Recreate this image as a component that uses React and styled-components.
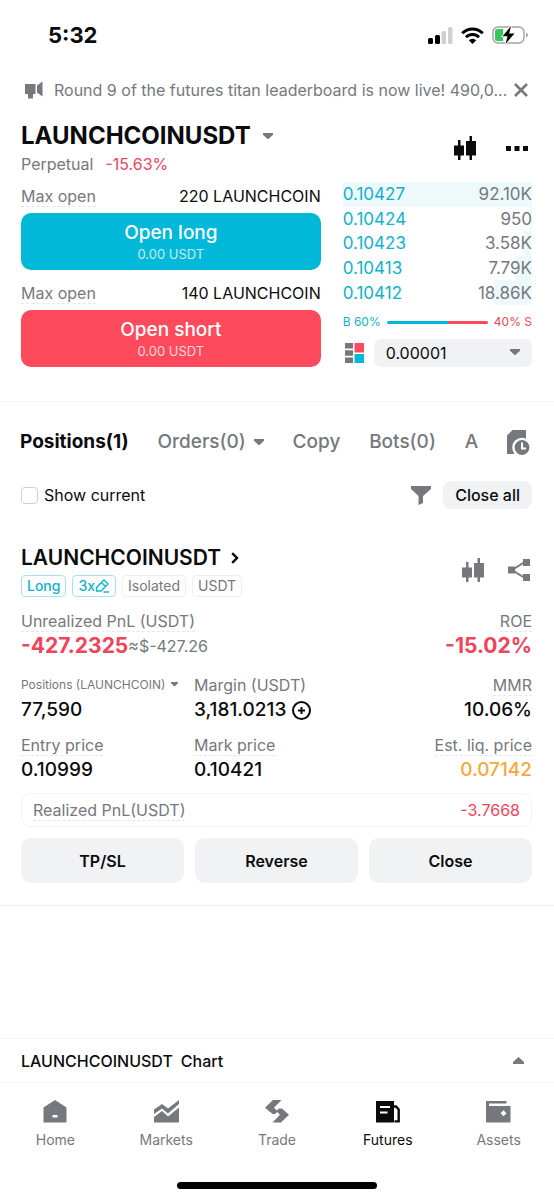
import React from "react";
import styled, { createGlobalStyle } from "styled-components";

const GlobalStyle = createGlobalStyle`
  * {
    box-sizing: border-box;
  }
  body {
    margin: 0;
    background: #ffffff;
    color: #0b0b0d;
    font-family: Inter, "Liberation Sans", sans-serif;
    font-size: 16px;
    line-height: 20px;
  }
  button, select, input {
    font: inherit;
    color: inherit;
  }
  button {
    border: none;
    background: none;
    padding: 0;
    cursor: pointer;
  }
  h1, h2, p, dl, dd {
    margin: 0;
  }
  svg {
    display: block;
    flex-shrink: 0;
  }
`;

const cyan = "#02b8d8";
const cyanText = "#0fb1cb";
const red = "#fe4a5d";
const redText = "#f0445a";
const grey = "#76787e";

const Page = styled.div`
  min-height: 100vh;
  display: flex;
  flex-direction: column;
`;
const StatusBar = styled.div`
  display: flex;
  align-items: center;
  justify-content: space-between;
  height: 70px;
  padding: 0 26px 0 48px;
`;
const Time = styled.span`
  font-size: 22px;
  line-height: 28px;
  font-weight: 700;
`;
const StatusIcons = styled.div`
  display: flex;
  align-items: center;
  gap: 8px;
`;
const Notice = styled.div`
  display: flex;
  align-items: center;
  gap: 4px;
  height: 40px;
  padding: 0 26px 0 24px;
  color: ${grey};
`;
const NoticeText = styled.p`
  flex: 1;
  min-width: 0;
  overflow: hidden;
  white-space: nowrap;
  text-overflow: ellipsis;
`;
const IconButton = styled.button`
  display: flex;
  color: ${(props) => props.$color || grey};
`;
const PairHeader = styled.header`
  display: flex;
  align-items: center;
  justify-content: space-between;
  padding: 12px 26px 0 21px;
`;
const PairTitle = styled.h1`
  display: flex;
  align-items: center;
  gap: 12px;
  font-size: 24px;
  line-height: 28px;
  font-weight: 700;
`;
const PairInfo = styled.p`
  display: flex;
  gap: 12px;
  padding-top: 4px;
  color: ${grey};
`;
const Loss = styled.span`
  color: ${redText};
`;
const HeaderIcons = styled.div`
  display: flex;
  align-items: center;
  gap: ${(props) => props.$gap}px;
`;
const TradePanel = styled.section`
  display: grid;
  grid-template-columns: 19fr 12fr;
  gap: 22px;
  padding: 8px 22px 34px 21px;
  border-bottom: 1px solid #f1f2f3;
`;
const OrderSide = styled.div`
  display: flex;
  flex-direction: column;
  padding-top: 4px;
`;
const MaxOpen = styled.div`
  display: flex;
  justify-content: space-between;
  padding-bottom: 6px;
`;
const Hint = styled.span`
  color: ${grey};
  border-bottom: 1px dashed #e6e7e9;
`;
const OpenButton = styled.button`
  height: 57px;
  margin-bottom: ${(props) => (props.$last ? 0 : 13)}px;
  border-radius: 10px;
  background: ${(props) => props.$color};
  color: #ffffff;
  font-size: 19px;
  line-height: 24px;
  font-weight: 500;
`;
const OpenAmount = styled.small`
  display: block;
  font-size: 13px;
  line-height: 18px;
  font-weight: 400;
  opacity: 0.75;
`;
const BookSide = styled.div`
  display: flex;
  flex-direction: column;
  min-width: 0;
`;
const Book = styled.table`
  width: 100%;
  height: 123px;
  border-collapse: collapse;
  font-size: 17px;
`;
const BookRow = styled.tr`
  background: linear-gradient(#edf9fb, #edf9fb) no-repeat right / ${(props) => props.$depth}% 100%;
`;
const Price = styled.td`
  padding: 0;
  color: ${cyanText};
`;
const Amount = styled.td`
  padding: 0;
  text-align: right;
  color: ${grey};
`;
const Ratio = styled.div`
  display: flex;
  align-items: center;
  gap: 6px;
  padding: 7px 0;
  font-size: 12px;
`;
const RatioLabel = styled.span`
  color: ${(props) => props.$color};
`;
const RatioBar = styled.div`
  flex: 1;
  height: 3px;
  border-radius: 2px;
  background: linear-gradient(to right, ${cyan} ${(props) => props.$buy}%, ${red} 0);
`;
const BookTools = styled.div`
  display: flex;
  align-items: center;
  gap: 10px;
  padding-left: 2px;
`;
const SelectBox = styled.div`
  position: relative;
  flex: 1;
  svg {
    position: absolute;
    right: 12px;
    top: 10px;
    pointer-events: none;
  }
`;
const Step = styled.select`
  display: block;
  width: 100%;
  height: 28px;
  padding: 0 12px;
  appearance: none;
  border: none;
  border-radius: 7px;
  background: #f1f2f4;
`;
const Tabs = styled.nav`
  display: flex;
  align-items: center;
  justify-content: space-between;
  padding: 26px 24px 0 20px;
`;
const Tab = styled.button`
  display: flex;
  align-items: center;
  gap: 8px;
  font-size: 19px;
  line-height: 28px;
  font-weight: ${(props) => (props.$active ? 700 : 500)};
  color: ${(props) => (props.$active ? "#0b0b0d" : grey)};
`;
const Filters = styled.div`
  display: flex;
  align-items: center;
  padding: 25px 22px 0 21px;
`;
const ShowCurrent = styled.label`
  display: flex;
  align-items: center;
  gap: 6px;
  margin-right: auto;
`;
const Check = styled.input`
  appearance: none;
  width: 17px;
  height: 17px;
  margin: 0;
  border: 1px solid #cfd0d6;
  border-radius: 4px;
  &:checked {
    background: ${cyan};
  }
`;
const CloseAll = styled.button`
  height: 28px;
  margin-left: 12px;
  padding: 0 12px;
  border-radius: 8px;
  background: #f1f2f4;
  font-weight: 500;
`;
const Position = styled.article`
  padding: 34px 22px 22px 21px;
  border-bottom: 1px solid #eeeff0;
`;
const PositionHead = styled.div`
  display: flex;
  align-items: center;
  justify-content: space-between;
  padding-right: 2px;
`;
const PositionTitle = styled.h2`
  display: flex;
  align-items: center;
  gap: 10px;
  font-size: 21px;
  line-height: 30px;
  font-weight: 600;
`;
const Tags = styled.div`
  display: flex;
  gap: 6px;
  padding-top: 2px;
`;
const Tag = styled.span`
  display: flex;
  align-items: center;
  height: 22px;
  padding: 0 5px;
  border: 1px solid ${(props) => (props.$accent ? "#a5e3ee" : "#eeeff1")};
  border-radius: 4px;
  font-size: 14px;
  font-weight: ${(props) => (props.$accent ? 500 : 400)};
  color: ${(props) => (props.$accent ? cyanText : grey)};
`;
const Stats = styled.dl`
  display: grid;
  grid-template-columns: repeat(${(props) => props.$columns}, minmax(0, 1fr));
  column-gap: 8px;
  row-gap: 10px;
  padding-top: ${(props) => props.$top}px;
`;
const Stat = styled.div`
  display: flex;
  flex-direction: column;
  align-items: ${(props) => (props.$end ? "flex-end" : "flex-start")};
`;
const StatLabel = styled.dt`
  display: flex;
  align-items: center;
  gap: 6px;
  height: 22px;
  white-space: nowrap;
  font-size: ${(props) => (props.$small ? 12 : 16)}px;
  color: ${grey};
  border-bottom: 1px ${(props) => (props.$plain ? "solid transparent" : "dashed #e6e7e9")};
`;
const StatValue = styled.dd`
  display: flex;
  align-items: center;
  gap: 6px;
  line-height: 28px;
  font-size: ${(props) => (props.$big ? 21 : 19)}px;
  font-weight: ${(props) => (props.$big ? 700 : 500)};
  color: ${(props) => props.$color || "inherit"};
`;
const Approx = styled.span`
  margin-left: -6px;
  font-size: 16px;
  font-weight: 400;
  color: ${grey};
`;
const Realized = styled.div`
  display: flex;
  align-items: center;
  justify-content: space-between;
  height: 34px;
  margin-top: 9px;
  padding: 0 11px;
  border: 1px solid #f2f3f4;
  border-radius: 9px;
`;
const Actions = styled.div`
  display: grid;
  grid-template-columns: repeat(3, 1fr);
  gap: 11px;
  padding-top: 11px;
`;
const Action = styled.button`
  height: 45px;
  border-radius: 10px;
  background: #f1f2f4;
  font-weight: 600;
`;
const Footer = styled.footer`
  margin-top: auto;
`;
const ChartBar = styled.button`
  display: flex;
  align-items: center;
  justify-content: space-between;
  width: 100%;
  height: 45px;
  padding: 0 30px 0 21px;
  border-top: 1px solid #f3f4f5;
  border-bottom: 1px solid #f6f7f8;
  font-weight: 500;
`;
const ChartName = styled.span`
  display: flex;
  gap: 8px;
`;
const BottomNav = styled.nav`
  display: grid;
  grid-template-columns: repeat(5, 1fr);
  padding-top: 16px;
`;
const NavLink = styled.a`
  display: flex;
  flex-direction: column;
  align-items: center;
  gap: 7px;
  font-size: 14px;
  text-decoration: none;
  color: ${(props) => (props.$active ? "#0b0b0d" : grey)};
`;
const HomeIndicator = styled.div`
  width: 36%;
  height: 7px;
  margin: 32px auto 11px;
  border-radius: 4px;
  background: #000000;
`;

const Caret = ({ width = 10, up }) => (
  <svg width={width} height={(width * 7) / 11} viewBox="0 0 11 7" fill={grey}>
    {up ? <path d="M5.5 0L11 5V7H0V5Z" /> : <path d="M0 0H11V2L5.5 7L0 2Z" />}
  </svg>
);

const SignalIcon = () => (
  <svg width="25" height="17" viewBox="0 0 25 17">
    <rect x="0" y="11" width="5" height="6" rx="1.5" fill="#000" />
    <rect x="7" y="8" width="5" height="9" rx="1.5" fill="#000" />
    <rect x="13.5" y="4" width="4.5" height="13" rx="1.5" fill="#d0d0d0" />
    <rect x="20" y="0" width="4.5" height="17" rx="1.5" fill="#d0d0d0" />
  </svg>
);

const WifiIcon = () => (
  <svg width="23" height="17" viewBox="0 0 23 17" fill="none" stroke="#000" strokeWidth="3">
    <path d="M1.2 6.2A14.6 14.6 0 0 1 21.8 6.2" />
    <path d="M5 10.2A9.2 9.2 0 0 1 18 10.2" />
    <path d="M11.5 17L7.8 13.2A5.2 5.2 0 0 1 15.2 13.2Z" fill="#000" stroke="none" />
  </svg>
);

const BatteryIcon = () => (
  <svg width="36" height="20" viewBox="0 0 36 20">
    <rect x="1" y="2" width="31" height="16" rx="5" fill="none" stroke="#a3a3a3" strokeWidth="1.4" />
    <path d="M34 7.5V12.5Q36 11.5 36 10Q36 8.5 34 7.5Z" fill="#a3a3a3" />
    <path d="M5 4H11V16H5.5Q3 16 3 13.5V6.5Q3 4 5 4Z" fill="#34c759" />
    <path
      d="M19 1L10.5 11.2H15.5L13.5 19L22.5 8.6H17.2Z"
      fill="#000"
      stroke="#fff"
      strokeWidth="1.6"
      paintOrder="stroke"
    />
  </svg>
);

const HornIcon = () => (
  <svg width="26" height="18" viewBox="0 0 26 18" fill="currentColor">
    <path d="M1 3H11.5V13H9V17.5H4V13H1Z" />
    <path d="M13 4.5L18.5 0.5V15.5L13 11.5Z" />
  </svg>
);

const CandlesIcon = () => (
  <svg width="23" height="24" viewBox="0 0 23 24" fill="currentColor">
    <path d="M4 4H6.5V9.5H10V19.5H6.5V24H4V19.500H0V9.500H4Z" />
    <path d="M15.500 0H18V5H22V19.500H18V24H15.500V19.500H12V5H15.500Z" />
  </svg>
);

const DotsIcon = () => (
  <svg width="22" height="5" viewBox="0 0 22 5" fill="currentColor">
    <path d="M0 0H5V5H0ZM8.5 0H13.5V5H8.5ZM17 0H22V5H17Z" />
  </svg>
);

const BookIcon = () => (
  <svg width="19" height="20" viewBox="0 0 19 20">
    <path d="M0 0H8V5.5H0ZM0 7.3H8V12.7H0ZM0 14.5H8V20H0Z" fill={grey} />
    <path d="M9.500 0H19V9.500H9.500Z" fill={red} />
    <path d="M9.500 11H19V20H9.500Z" fill={cyan} />
  </svg>
);

const HistoryIcon = () => (
  <svg width="23" height="25" viewBox="0 0 23 25">
    <path d="M5.5 0H19V9H15A9 9 0 0 0 6 18Q6 21 7.5 24H0V5.5Z" fill={grey} />
    <circle cx="15" cy="17.5" r="7.5" fill={grey} />
    <path d="M15 12.5V18.5H19" fill="none" stroke="#fff" strokeWidth="2" />
    <circle cx="15" cy="17.5" r="8.8" fill="none" stroke="#fff" strokeWidth="2" />
  </svg>
);

const FunnelIcon = () => (
  <svg width="20" height="19" viewBox="0 0 20 19" fill="currentColor">
    <path d="M0 0H20V3L12 10V17L7.5 19V10L0 3Z" />
  </svg>
);

const ShareIcon = () => (
  <svg width="22" height="22" viewBox="0 0 22 22" fill="currentColor">
    <path d="M16 3.5L4 11L16 18.5" fill="none" stroke="currentColor" strokeWidth="2" />
    <path d="M0 7.5H7V14.5H0ZM15 0H22V7H15ZM15 15H22V22H15Z" />
  </svg>
);

const PencilIcon = () => (
  <svg width="15" height="14" viewBox="0 0 15 14" fill="none" stroke="currentColor" strokeWidth="1.4">
    <path d="M1.5 8.5L9 1L13 5L6 12H1.5ZM6.5 3.5L10.5 7.5M8.5 13H14" />
  </svg>
);

const ChevronIcon = () => (
  <svg width="8" height="12" viewBox="0 0 8 12" fill="none" stroke="#0b0b0d" strokeWidth="2.4">
    <path d="M1.2 1.2L6 6L1.2 10.8" />
  </svg>
);

const PlusIcon = () => (
  <svg width="19" height="19" viewBox="0 0 19 19" fill="none" stroke="#0b0b0d" strokeWidth="2">
    <circle cx="9.5" cy="9.5" r="8.5" />
    <path d="M9.5 6V13M6 9.5H13" />
  </svg>
);

const CloseIcon = () => (
  <svg width="14" height="14" viewBox="0 0 14 14" stroke="currentColor" strokeWidth="2.6">
    <path d="M1 1L13 13M13 1L1 13" />
  </svg>
);

const HomeIcon = () => (
  <svg width="24" height="24" viewBox="0 0 24 24" fill="currentColor" fillRule="evenodd">
    <path d="M12 1L23.5 8.5V23.5H0.5V8.5ZM9.5 16V18.5H14.5V16Z" />
  </svg>
);

const MarketsIcon = () => (
  <svg width="25" height="24" viewBox="0 0 25 24" fill="currentColor">
    <path d="M0 10.5L8 5L14 9.5L25 1V5L14 14.5L8 9.5L0 15Z" />
    <path d="M0 18L8 12L14 17.5L25 8.5V23.5H0Z" />
  </svg>
);

const TradeIcon = () => (
  <svg width="26" height="24" viewBox="0 0 26 24" fill="currentColor">
    <path d="M9 1H17.5L10 8.8L13.8 12.5L11 15H8.5L1 8.8Z" />
    <path d="M17 23.5H8.5L16 15.7L12.2 12L15 9.5H18L25 15.7Z" />
  </svg>
);

const FuturesIcon = () => (
  <svg width="24" height="24" viewBox="0 0 24 24">
    <path d="M0 2H18V23.5H0Z" fill="currentColor" />
    <path d="M4 8H14M4 13.5H11.5" stroke="#fff" strokeWidth="2.2" />
    <path d="M18 7.5H20L22.7 10.5V22.4H18.5" fill="none" stroke="currentColor" strokeWidth="2.4" />
  </svg>
);

const AssetsIcon = () => (
  <svg width="25" height="24" viewBox="0 0 25 24" fill="currentColor" fillRule="evenodd">
    <path d="M0 2H20.5V4.5H3V7H24.5V23.5H0ZM17.5 11.3L14.5 14.3L17.5 17.3L20.5 14.3Z" />
  </svg>
);

const book = [
  { price: "0.10427", amount: "92.10K", depth: 100 },
  { price: "0.10424", amount: "950", depth: 1 },
  { price: "0.10423", amount: "3.58K", depth: 4 },
  { price: "0.10413", amount: "7.79K", depth: 9 },
  { price: "0.10412", amount: "18.86K", depth: 20 },
];

const links = [
  { label: "Home", Icon: HomeIcon },
  { label: "Markets", Icon: MarketsIcon },
  { label: "Trade", Icon: TradeIcon },
  { label: "Futures", Icon: FuturesIcon, active: true },
  { label: "Assets", Icon: AssetsIcon },
];

const OpenOrder = ({ max, label, color, last }) => (
  <>
    <MaxOpen>
      <Hint>Max open</Hint>
      <span>{max} LAUNCHCOIN</span>
    </MaxOpen>
    <OpenButton $color={color} $last={last}>
      {label}
      <OpenAmount>0.00 USDT</OpenAmount>
    </OpenButton>
  </>
);

const App = () => {
  return (
    <Page>
      <GlobalStyle />
      <StatusBar>
        <Time>5:32</Time>
        <StatusIcons>
          <SignalIcon />
          <WifiIcon />
          <BatteryIcon />
        </StatusIcons>
      </StatusBar>

      <Notice>
        <HornIcon />
        <NoticeText>Round 9 of the futures titan leaderboard is now live! 490,0...</NoticeText>
        <IconButton aria-label="Dismiss">
          <CloseIcon />
        </IconButton>
      </Notice>

      <PairHeader>
        <div>
          <PairTitle>
            LAUNCHCOINUSDT <Caret />
          </PairTitle>
          <PairInfo>
            Perpetual <Loss>-15.63%</Loss>
          </PairInfo>
        </div>
        <HeaderIcons $gap={29}>
          <IconButton $color="#0b0b0d" aria-label="Chart">
            <CandlesIcon />
          </IconButton>
          <IconButton $color="#0b0b0d" aria-label="More">
            <DotsIcon />
          </IconButton>
        </HeaderIcons>
      </PairHeader>

      <TradePanel>
        <OrderSide>
          <OpenOrder max="220" label="Open long" color={cyan} />
          <OpenOrder max="140" label="Open short" color={red} last />
        </OrderSide>
        <BookSide>
          <Book>
            <tbody>
              {book.map((row) => (
                <BookRow key={row.price} $depth={row.depth}>
                  <Price>{row.price}</Price>
                  <Amount>{row.amount}</Amount>
                </BookRow>
              ))}
            </tbody>
          </Book>
          <Ratio>
            <RatioLabel $color={cyanText}>B 60%</RatioLabel>
            <RatioBar $buy={60} />
            <RatioLabel $color={redText}>40% S</RatioLabel>
          </Ratio>
          <BookTools>
            <IconButton aria-label="Order book layout">
              <BookIcon />
            </IconButton>
            <SelectBox>
              <Step aria-label="Price step" defaultValue="0.00001">
                <option>0.00001</option>
              </Step>
              <Caret />
            </SelectBox>
          </BookTools>
        </BookSide>
      </TradePanel>

      <Tabs>
        <Tab $active>Positions(1)</Tab>
        <Tab>
          Orders(0) <Caret />
        </Tab>
        <Tab>Copy</Tab>
        <Tab>Bots(0)</Tab>
        <Tab>A</Tab>
        <IconButton aria-label="History">
          <HistoryIcon />
        </IconButton>
      </Tabs>

      <Filters>
        <ShowCurrent>
          <Check type="checkbox" />
          Show current
        </ShowCurrent>
        <IconButton aria-label="Filter">
          <FunnelIcon />
        </IconButton>
        <CloseAll>Close all</CloseAll>
      </Filters>

      <Position>
        <PositionHead>
          <div>
            <PositionTitle>
              LAUNCHCOINUSDT <ChevronIcon />
            </PositionTitle>
            <Tags>
              <Tag $accent>Long</Tag>
              <Tag $accent>
                3x
                <PencilIcon />
              </Tag>
              <Tag>Isolated</Tag>
              <Tag>USDT</Tag>
            </Tags>
          </div>
          <HeaderIcons $gap={23}>
            <IconButton aria-label="Position chart">
              <CandlesIcon />
            </IconButton>
            <IconButton aria-label="Share">
              <ShareIcon />
            </IconButton>
          </HeaderIcons>
        </PositionHead>

        <Stats $columns={2} $top={13}>
          <Stat>
            <StatLabel>Unrealized PnL (USDT)</StatLabel>
            <StatValue $big $color={redText}>
              -427.2325 <Approx>≈$-427.26</Approx>
            </StatValue>
          </Stat>
          <Stat $end>
            <StatLabel>ROE</StatLabel>
            <StatValue $big $color={redText}>
              -15.02%
            </StatValue>
          </Stat>
        </Stats>
        <Stats $columns={3} $top={14}>
          <Stat>
            <StatLabel $small $plain>
              Positions (LAUNCHCOIN) <Caret width={7} />
            </StatLabel>
            <StatValue>77,590</StatValue>
          </Stat>
          <Stat>
            <StatLabel $plain>Margin (USDT)</StatLabel>
            <StatValue>
              3,181.0213
              <IconButton aria-label="Add margin">
                <PlusIcon />
              </IconButton>
            </StatValue>
          </Stat>
          <Stat $end>
            <StatLabel>MMR</StatLabel>
            <StatValue>10.06%</StatValue>
          </Stat>
          <Stat>
            <StatLabel>Entry price</StatLabel>
            <StatValue>0.10999</StatValue>
          </Stat>
          <Stat>
            <StatLabel>Mark price</StatLabel>
            <StatValue>0.10421</StatValue>
          </Stat>
          <Stat $end>
            <StatLabel>Est. liq. price</StatLabel>
            <StatValue $color="#f5a83c">0.07142</StatValue>
          </Stat>
        </Stats>

        <Realized>
          <Hint>Realized PnL(USDT)</Hint>
          <Loss>-3.7668</Loss>
        </Realized>
        <Actions>
          <Action>TP/SL</Action>
          <Action>Reverse</Action>
          <Action>Close</Action>
        </Actions>
      </Position>

      <Footer>
        <ChartBar>
          <ChartName>
            <span>LAUNCHCOINUSDT</span>
            <span>Chart</span>
          </ChartName>
          <Caret width={11} up />
        </ChartBar>
        <BottomNav>
          {links.map(({ label, Icon, active }) => (
            <NavLink key={label} href={`#${label.toLowerCase()}`} $active={active}>
              <Icon />
              {label}
            </NavLink>
          ))}
        </BottomNav>
        <HomeIndicator />
      </Footer>
    </Page>
  );
};

export default App;
